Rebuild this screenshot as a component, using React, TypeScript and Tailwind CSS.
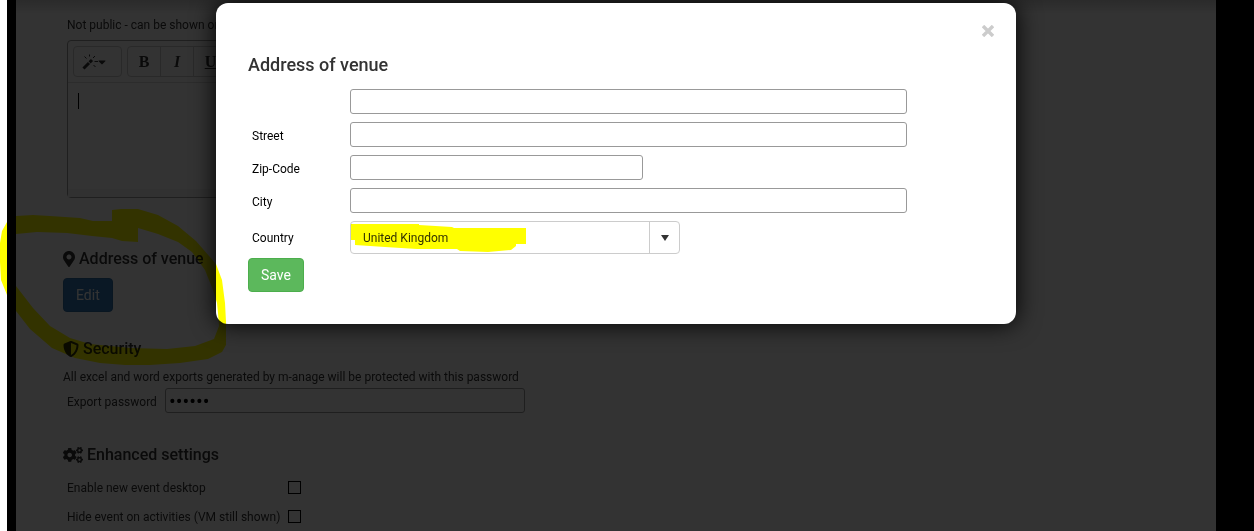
import React from "react";
import { FaCaretDown, FaCogs, FaMapMarkerAlt, FaShieldAlt } from "react-icons/fa";

const fields = [
    { id: "venue", label: "", width: "w-full max-w-[557px]" },
    { id: "street", label: "Street", width: "w-full max-w-[557px]" },
    { id: "zip", label: "Zip-Code", width: "w-full max-w-[293px]" },
    { id: "city", label: "City", width: "w-full max-w-[557px]" },
];

const settings = [
    { id: "desktop", label: "Enable new event desktop" },
    { id: "hide", label: "Hide event on activities (VM still shown)" },
];

function WandIcon() {
    return (
        <svg width="16" height="16" viewBox="0 0 16 16" fill="none" stroke="currentColor">
            <path d="M1.5 14.5 L7 9" strokeWidth="3" />
            <path d="M7.6 8.4 L10 6" strokeWidth="3" />
            <path d="M2.5 2.5 L4.5 4.5 M7.5 0.5 V2.5 M13 2 L11 4 M12.5 7.5 H16 M11.5 11 L13.5 13" strokeWidth="1" />
        </svg>
    );
}

function Editor() {
    return (
        <div className="mt-1.5 flex h-[158px] w-full max-w-[600px] flex-col rounded border border-[#999]">
            <div className="flex gap-[5px] border-b border-[#ddd] p-[5px]">
                <button type="button" aria-label="Style" className="flex h-[31px] w-[49px] items-center rounded-sm border border-[#ccc] pl-2">
                    <WandIcon />
                    <FaCaretDown className="h-3 w-2" />
                </button>
                <div className="flex h-[31px] divide-x divide-[#ccc] rounded-sm border border-[#ccc] font-['Liberation_Serif',serif] text-base font-bold">
                    <button type="button" className="w-[33px]">B</button>
                    <button type="button" className="w-[33px] italic">I</button>
                    <button type="button" className="w-[33px] underline">U</button>
                </div>
            </div>
            <div className="flex-1 px-2.5 pt-2.5">
                <div className="h-4 w-px bg-black" />
            </div>
            <div className="h-2 bg-[#f5f5f5]" />
        </div>
    );
}

function VenueDialog() {
    return (
        <div role="dialog" aria-labelledby="venue-title" className="relative mt-[3px] w-full max-w-[800px] self-start rounded-xl bg-white px-8 pt-[50px] pb-8 shadow-[0_0_25px_#000]">
            <button type="button" aria-label="Close" className="absolute top-[22px] right-[22px] text-[#ccc]">
                <svg width="12" height="12" viewBox="0 0 12 12" stroke="currentColor" strokeWidth="3.4" className="block">
                    <path d="M1 1 L11 11 M11 1 L1 11" />
                </svg>
            </button>
            <h2 id="venue-title" className="text-lg leading-6 font-medium text-[#333]">Address of venue</h2>
            <form className="mt-3 text-xs text-black">
                <div className="flex flex-col gap-2">
                    {fields.map((field) => (
                        <div key={field.id} className="flex items-center">
                            <label htmlFor={field.id} className="w-[102px] shrink-0 pt-0.5 pl-1">{field.label}</label>
                            <input
                                id={field.id}
                                aria-label={field.label || "Venue"}
                                className={`h-[25px] rounded-[3px] border border-[#999] px-1 ${field.width}`}
                            />
                        </div>
                    ))}
                    <div className="flex items-center">
                        <label htmlFor="country" className="w-[102px] shrink-0 pl-1">Country</label>
                        <div className="relative flex h-[33px] w-full max-w-[330px] rounded border border-[#ccc] text-[#333]">
                            <select id="country" className="min-w-0 flex-1 appearance-none pl-3">
                                <option>United Kingdom</option>
                            </select>
                            <span className="flex w-[30px] items-center justify-center border-l border-[#ccc]">
                                <svg width="8" height="6" viewBox="0 0 8 6" fill="currentColor">
                                    <path d="M0 0 H8 L4 6 Z" />
                                </svg>
                            </span>
                            <svg width="176" height="33" className="pointer-events-none absolute -top-px left-0 mix-blend-multiply" fill="#ff0">
                                <path d="M0 3 H68 V4 L101 6 L103 7 H175 V23 H165 V25 L160 29 L137 31 L109 30 L106 28 L66 28 L34 26 L4 24 V19 H0 Z" />
                            </svg>
                        </div>
                    </div>
                </div>
                <button type="button" className="mt-1 h-[34px] rounded border border-[#4cae4c] bg-[#5cb85c] px-3 text-sm text-white">Save</button>
            </form>
        </div>
    );
}

export default function App() {
    return (
        <div className="relative h-screen overflow-hidden bg-white pl-[7px] font-[Roboto,sans-serif] text-xs text-[#333]">
            <div className="relative h-full bg-black pr-[38px] pl-[9px]">
                <main className="h-full bg-white bg-linear-to-b from-[#d4d4d4] to-white to-[14px] pt-4 pl-[47px]">
                    <div className="pl-1">
                        <p className="leading-[18px]">Not public - can be shown on</p>
                        <Editor />
                    </div>

                    <h3 className="mt-[49px] flex items-center gap-1 text-base leading-6 font-medium">
                        <FaMapMarkerAlt className="h-4 w-3" />
                        Address of venue
                    </h3>
                    <button type="button" className="mt-[7px] block h-[34px] rounded border border-[#2e6da4] bg-[#337ab7] px-3 text-sm text-white">Edit</button>

                    <h3 className="mt-[25px] flex items-center gap-1 text-base leading-6 font-medium">
                        <FaShieldAlt className="h-4 w-4" />
                        Security
                    </h3>
                    <p className="mt-[7px] leading-[18px]">All excel and word exports generated by m-anage will be protected with this password</p>
                    <div className="mt-0.5 flex items-center pl-1">
                        <label htmlFor="password" className="w-[98px] shrink-0 pt-0.5">Export password</label>
                        <input id="password" type="password" defaultValue="secret" className="h-[25px] w-full max-w-[360px] rounded-[3px] border border-[#999] px-[3px] text-xl text-black" />
                    </div>

                    <h3 className="mt-[30px] flex items-center gap-1 text-base leading-6 font-medium">
                        <FaCogs className="h-4 w-5" />
                        Enhanced settings
                    </h3>
                    <div className="mt-1.5 pl-1">
                        {settings.map((setting) => (
                            <div key={setting.id} className="flex h-[29px] items-center">
                                <label htmlFor={setting.id} className="w-[221px]">{setting.label}</label>
                                <input id={setting.id} type="checkbox" className="h-[13px] w-[13px] appearance-none border border-black" />
                            </div>
                        ))}
                    </div>
                </main>

                {/* Dimmed layer with the dialog on top */}
                <div className="absolute inset-0 flex justify-center bg-black/80 pr-[38px] pl-[9px]">
                    <VenueDialog />
                </div>
            </div>

            {/* Marker ring */}
            <svg width="230" height="370" className="pointer-events-none absolute top-0 left-0 mix-blend-multiply" fill="#ff0" fillRule="evenodd">
                <path d="M7 222 L16 216 L33 215 L50 216 L80 218 L93 221 L112 221 V210 L121 209 L138 209 L158 215 L178 226 L196 241 L216 264 L222 280 L225 303 L226 322 V345 L222 352 L208 359 L180 363 L150 365 H125 L100 363 L75 358 L52 348 L30 329 L16 311 L7 295 L1 280 L0 262 V243 L2 231 Z M16 234 L10 240 L7 252 V264 L16 286 L33 308 L50 326 L70 338 L90 344 L130 348 L167 349 L195 346 L214 339 L219 326 L218 313 L217 303 L213 290 L205 270 L192 252 L178 242 L158 234 L138 228 V242 L122 241 L112 238 L92 236 L67 233 L37 232 Z" />
            </svg>
        </div>
    );
}
